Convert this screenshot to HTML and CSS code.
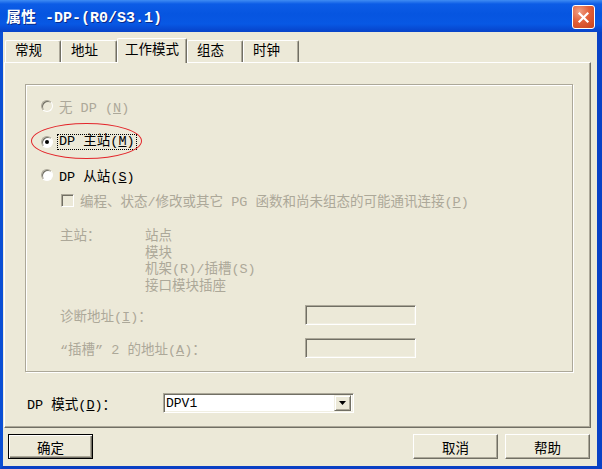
FILE: index.html
```html
<!DOCTYPE html>
<html>
<head>
  <title>属性 -DP-(R0/S3.1)</title>
  <link rel="stylesheet" href="styles.css">
</head>
<body>
  <div class="window">
    <div class="titlebar">
      <span class="title">属性 -DP-(R0/S3.1)</span>
      <span class="close-btn">
        <svg width="13" height="13" viewBox="0 0 13 13"><path d="M2.5 2.5 L10.5 10.5 M10.5 2.5 L2.5 10.5" stroke="#fff" stroke-width="2.2" stroke-linecap="square"/></svg>
      </span>
    </div>

    <div class="client">
      <div class="tabs">
        <div class="tab">常规</div>
        <div class="tab">地址</div>
        <div class="tab active">工作模式</div>
        <div class="tab">组态</div>
        <div class="tab">时钟</div>
      </div>

      <div class="panel">
        <div class="group">
          <div class="option row-none disabled">
            <span class="radio"></span>
            <span class="label">无 DP (<u>N</u>)</span>
          </div>
          <div class="option row-master">
            <span class="radio checked"></span>
            <span class="label focus">DP 主站(<u>M</u>)</span>
            <span class="mark"></span>
          </div>
          <div class="option row-slave">
            <span class="radio"></span>
            <span class="label">DP 从站(<u>S</u>)</span>
          </div>
          <div class="check-row disabled">
            <span class="checkbox"></span>
            <span>编程、状态/修改或其它 PG 函数和尚未组态的可能通讯连接(<u>P</u>)</span>
          </div>
          <div class="master-info disabled">
            <span class="info-key">主站：</span>
            <div class="info-list">
              <div>站点</div>
              <div>模块</div>
              <div>机架(R)/插槽(S)</div>
              <div>接口模块插座</div>
            </div>
          </div>
          <div class="field-row diag-row disabled">
            <span class="field-label">诊断地址(<u>I</u>)：</span>
            <span class="field-box"></span>
          </div>
          <div class="field-row slot-row disabled">
            <span class="field-label">“插槽” 2 的地址(<u>A</u>)：</span>
            <span class="field-box"></span>
          </div>
        </div>

        <div class="mode-row">
          <span class="mode-label">DP 模式(<u>D</u>)：</span>
          <div class="combo">
            <span class="combo-text">DPV1</span>
            <span class="combo-btn">
              <svg width="7" height="4" viewBox="0 0 7 4"><path d="M0 0 H7 L3.5 4 Z" fill="#000"/></svg>
            </span>
          </div>
        </div>
      </div>

      <div class="buttons">
        <button class="btn default">确定</button>
        <span class="spacer"></span>
        <button class="btn">取消</button>
        <button class="btn">帮助</button>
      </div>
    </div>
  </div>
</body>
</html>
```

FILE: styles.css
```css
body {
  margin: 0;
  font-family: "Liberation Mono", "Noto Sans CJK SC", monospace;
  font-size: 13.5px;
  color: #000;
}
.window {
  width: 602px;
  height: 469px;
  display: flex;
  flex-direction: column;
  background-color: #ece9d8;
}

/* Title bar */
.titlebar {
  height: 32px;
  flex-shrink: 0;
  display: flex;
  align-items: center;
  justify-content: space-between;
  padding: 0 7px 0 6px;
  background: linear-gradient(to bottom, #3f8cf3 0px, #0c5ce6 4px, #0655e0 14px, #0858e4 24px, #0747cf 30px, #0a44c8 32px);
}
.title {
  color: white;
  font-weight: bold;
  font-size: 15px;
  text-shadow: 1px 1px 0 #0a2a8a;
}
.close-btn {
  width: 21px;
  height: 22px;
  margin-top: 2px;
  display: flex;
  align-items: center;
  justify-content: center;
  border: 1px solid white;
  border-radius: 3px;
  background: radial-gradient(circle at 30% 25%, #f0a085 0%, #e2603a 45%, #c8421c 100%);
}

/* Client area */
.client {
  flex: 1;
  display: flex;
  flex-direction: column;
  border-left: 3px solid #0b4fd4;
  border-right: 5px solid #0841c6;
  border-bottom: 3px solid #0a3fc4;
  padding: 6px 6px 0 1px;
}

/* Tabs */
.tabs {
  display: flex;
  align-items: flex-start;
  padding-left: 1px;
  height: 24px;
  position: relative;
  z-index: 1;
}
.tab {
  height: 22px;
  margin-top: 2px;
  line-height: 21px;
  padding: 0 18px 0 9px;
  border-top: 1px solid white;
  border-left: 1px solid white;
  border-right: 1px solid #716f64;
  border-radius: 2px 2px 0 0;
  box-shadow: inset -1px 0 0 #aca899;
  box-sizing: border-box;
  background-color: #ece9d8;
}
.tab.active {
  height: 25px;
  margin-top: 0;
  line-height: 23px;
  padding: 0 7px;
}

.panel {
  border: 1px solid;
  border-color: white #716f64 #716f64 white;
  box-shadow: inset -1px -1px 0 #aca899;
  padding: 21px 17px 14px 20px;
}

/* Group box */
.group {
  border: 1px solid #aca899;
  box-shadow: inset 1px 1px 0 white, 1px 1px 0 white;
  padding: 13px 15px 13px 15px;
}
.disabled {
  color: #aca899;
}
.option {
  height: 16px;
  display: flex;
  align-items: center;
  position: relative;
}
.row-master {
  margin-top: 20px;
}
.row-slave {
  margin-top: 17px;
}
.radio {
  width: 12px;
  height: 12px;
  box-sizing: border-box;
  border-radius: 50%;
  border: 1px solid;
  border-color: #aca899 white white #aca899;
  box-shadow: inset 1px 1px 0 #716f64;
  background-color: white;
  margin-right: 6px;
  position: relative;
}
.option.disabled .radio {
  background-color: #ece9d8;
}
.radio.checked:after {
  content: "";
  position: absolute;
  width: 4px;
  height: 4px;
  border-radius: 50%;
  background-color: black;
  left: 3px;
  top: 3px;
}
.label.focus {
  border: 1px dotted #000;
  padding: 0 1px;
  margin-left: -2px;
  line-height: 14px;
}
.mark {
  position: absolute;
  left: -10px;
  top: -11px;
  width: 111px;
  height: 36px;
  box-sizing: border-box;
  border: 1px solid #e3262b;
  border-radius: 50%;
}
.check-row {
  margin-top: 9px;
  height: 16px;
  display: flex;
  align-items: center;
  padding-left: 20px;
}
.checkbox {
  width: 13px;
  height: 13px;
  box-sizing: border-box;
  border: 1px solid;
  border-color: #aca899 white white #aca899;
  box-shadow: inset 1px 1px 0 #716f64;
  background-color: #ece9d8;
  margin-right: 6px;
}
.master-info {
  margin-top: 21px;
  display: flex;
  padding-left: 19px;
  line-height: 16.5px;
}
.info-key {
  width: 85px;
}
.field-row {
  height: 20px;
  display: flex;
  align-items: center;
  padding-left: 19px;
}
.diag-row {
  margin-top: 10px;
}
.slot-row {
  margin-top: 13px;
}
.field-label {
  width: 245px;
}
.field-box {
  width: 111px;
  height: 20px;
  box-sizing: border-box;
  border: 1px solid;
  border-color: #aca899 white white #aca899;
  box-shadow: inset 1px 1px 0 #716f64, inset -1px -1px 0 #f1efe2;
  background-color: #ece9d8;
}

/* Mode selector */
.mode-row {
  margin-top: 21px;
  height: 20px;
  display: flex;
  align-items: center;
  padding-left: 2px;
}
.mode-label {
  width: 136px;
}
.combo {
  width: 191px;
  height: 20px;
  box-sizing: border-box;
  border: 1px solid;
  border-color: #aca899 white white #aca899;
  box-shadow: inset 1px 1px 0 #716f64, inset -1px -1px 0 #f1efe2;
  background-color: white;
  display: flex;
  align-items: center;
  padding: 0 2px 0 2px;
}
.combo-text {
  flex: 1;
  font-size: 13px;
}
.combo-btn {
  width: 17px;
  height: 16px;
  box-sizing: border-box;
  border: 1px solid;
  border-color: #f1efe2 #716f64 #716f64 #f1efe2;
  box-shadow: inset 1px 1px 0 white, inset -1px -1px 0 #aca899;
  background-color: #ece9d8;
  display: flex;
  align-items: center;
  justify-content: center;
}

/* Dialog buttons */
.buttons {
  display: flex;
  margin-top: 6px;
  padding: 0 1px 0 4px;
}
.spacer {
  flex: 1;
}
.btn {
  width: 85px;
  height: 25px;
  margin-left: 7px;
  font-family: "Liberation Mono", "Noto Sans CJK SC", monospace;
  font-size: 13.5px;
  color: #000;
  background-color: #ece9d8;
  border: 1px solid;
  border-color: white #716f64 #716f64 white;
  box-shadow: inset -1px -1px 0 #aca899;
  padding: 0;
}
.btn.default {
  margin-left: 0;
  border: 1px solid #000;
  box-shadow: inset 1px 1px 0 white, inset -1px -1px 0 #716f64, inset -2px -2px 0 #aca899;
}
```
